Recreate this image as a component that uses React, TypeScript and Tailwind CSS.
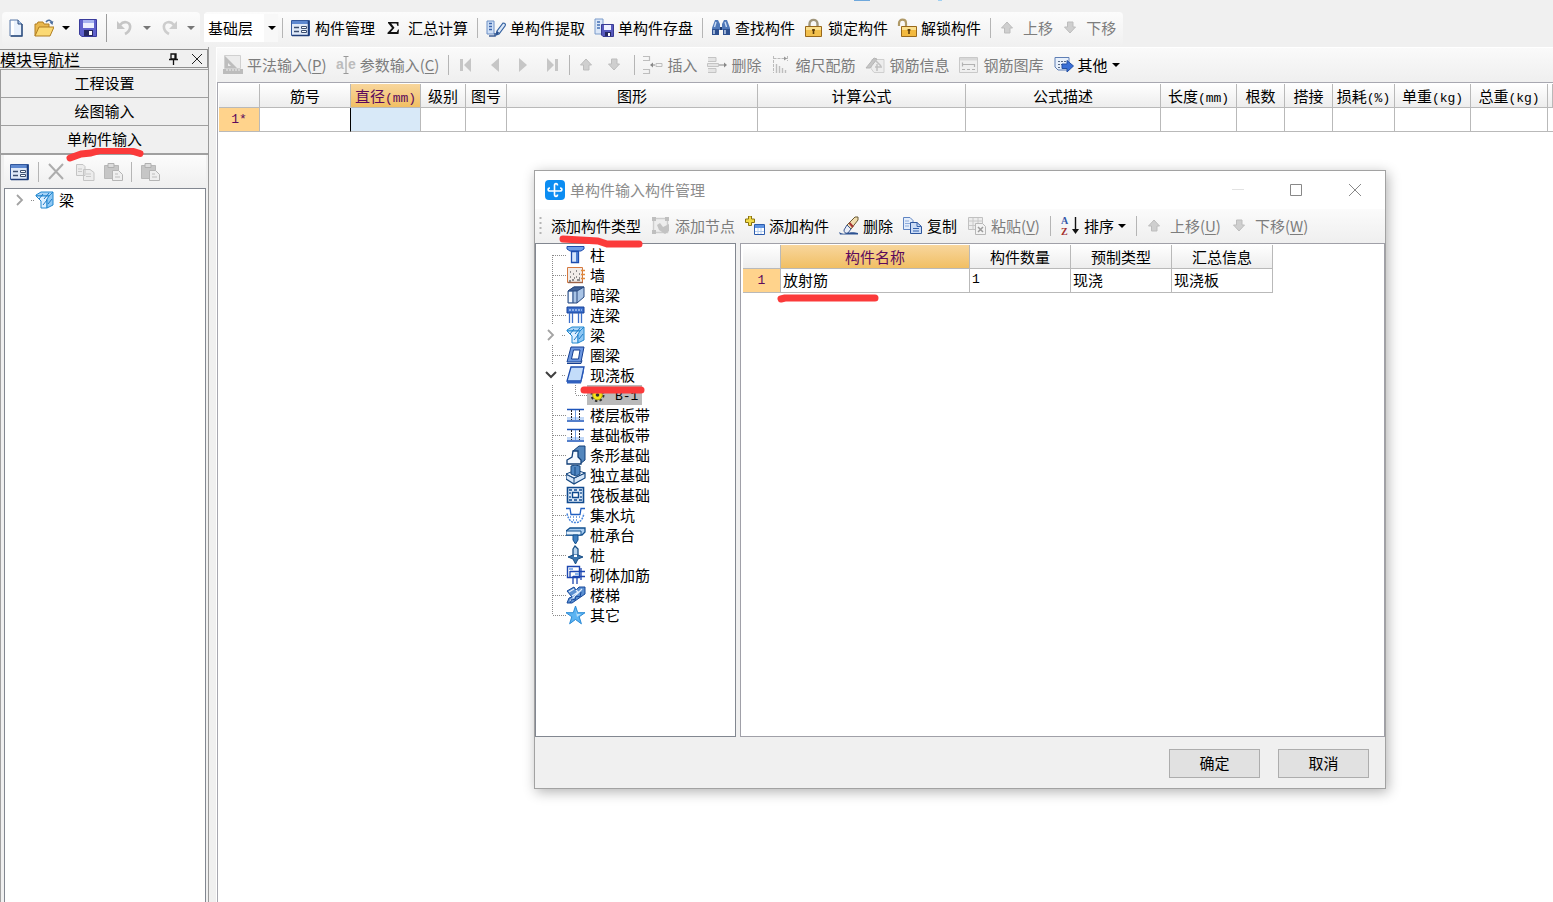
import { useState } from "react";
import type { ReactNode } from "react";
import clsx from "clsx";

type IconProps = { children: ReactNode; className?: string };

function Svg({ children, className }: IconProps) {
  return (
    <svg width="20" height="20" viewBox="0 0 20 20" fill="none" aria-hidden="true" className={clsx("shrink-0", className)}>
      {children}
    </svg>
  );
}

/* ---------- toolbar icons ---------- */

const NewIcon = () => (
  <Svg>
    <path d="M4 2h8l4 4v12H4z" fill="#e9f1fc" stroke="#5c7aa8" />
    <path d="M5 3h3v14H5z" fill="#fff" />
    <path d="M12 2v4h4" fill="#a9c3e8" stroke="#2f4f7f" />
    <path d="M16 6v12H5" stroke="#2f4f7f" strokeWidth="1.4" />
  </Svg>
);

const OpenIcon = () => (
  <Svg>
    <path d="M1 18V6h2l1-2h5l1 2h5v4" fill="#e9b84e" stroke="#b17f22" />
    <path d="M1 18 5 9h15l-4 9z" fill="#fbd974" stroke="#b17f22" />
    <path d="M12 4c2-3 5-2 6 1" stroke="#4d6f9f" strokeWidth="1.4" />
    <path d="m15.500 4.500 3 2.500.800-4z" fill="#4d6f9f" />
  </Svg>
);

const SaveIcon = () => (
  <Svg>
    <path d="M1.500 1.500h17v17H4l-2.500-2z" fill="#5f62cc" stroke="#3a3c9c" />
    <path d="M5 2h11v8H5z" fill="#eef1ff" />
    <path d="M5 2h11v3H5z" fill="#a8b4f0" />
    <path d="M6 12h9v6H6z" fill="#26285f" />
    <path d="M11 13h3v4h-3z" fill="#fff" />
  </Svg>
);

const UndoIcon = () => (
  <Svg>
    <path d="M5 7c4-5 11-3 10 3-.500 3-3 5-5 6" stroke="#c6c6c6" strokeWidth="2.600" />
    <path d="M2 3v8h8z" fill="#c6c6c6" />
  </Svg>
);

const RedoIcon = () => (
  <Svg>
    <path d="M15 7C11 2 4 4 5 10c.500 3 3 5 5 6" stroke="#cdcdcd" strokeWidth="2.600" />
    <path d="M18 3v8h-8z" fill="#cdcdcd" />
  </Svg>
);

const ManageIcon = () => (
  <Svg>
    <path d="M.500 2.500h18v15H.500z" fill="#dfe9f8" stroke="#33589c" />
    <path d="M1 3h17v3H1z" fill="#5d88d0" />
    <path d="M17.500 3v14.500H1" stroke="#1f3c78" strokeWidth="1.500" />
    <path d="M3 9.500h5M3 13.500h5" stroke="#3c4f70" strokeWidth="1.300" />
    <path d="M10.500 8.500h5v2h-5zM10.500 12.500h5v2h-5z" fill="#fff" stroke="#3c4f70" />
  </Svg>
);

const SigmaIcon = () => (
  <Svg>
    <path d="M4 4h10.500v4h-1l-1-2.400H7.200L10.500 9.800 6.800 14h6l1.200-2.400h1L14.500 16H3.500v-1.200L8 10 4 5z" fill="#111" />
  </Svg>
);

const ExtractIcon = () => (
  <Svg>
    <path d="M1 3h7v13H1z" fill="#cfe0f7" stroke="#6d8fc4" />
    <path d="M3 5.500h3M3 8.500h3M3 11.500h3" stroke="#3e66ac" strokeWidth="1.300" />
    <path d="M3 18h6v-3" stroke="#3e5f96" strokeWidth="1.600" />
    <path d="m10 17 1-4 6-8c2 0 3 1 2 3l-6 8z" fill="#dbe8f8" stroke="#33609f" strokeWidth="1.200" />
    <path d="m10 17 1-4 2.500 2z" fill="#2a4f8a" />
  </Svg>
);

const StoreIcon = () => (
  <Svg>
    <path d="M1 1h8v15H1z" fill="#dbe7f8" stroke="#7b9bcb" />
    <path d="M3 4h3M3 7h3M3 10h3" stroke="#4670b4" strokeWidth="1.400" />
    <path d="M7.500 6.500h12v12H9l-1.500-1.500z" fill="#5759bd" stroke="#393b93" />
    <path d="M10 7h7v5h-7z" fill="#eef1ff" />
    <path d="M11 14h6v4h-6z" fill="#26285f" />
    <path d="M14 15h2v3h-2z" fill="#fff" />
  </Svg>
);

const BinocularsIcon = () => (
  <Svg>
    <path d="M4 2h3l2 4v3h2V6l2-4h3l3 8v7h-7v-5H8v5H1v-7z" fill="#4f78b8" />
    <path d="M1 11h7v6H1zM12 11h7v6h-7z" fill="#2d5090" />
    <path d="M3 12v4M14 12v4M5 4 3.500 9M14 4l1.500 5" stroke="#c9dbf4" strokeWidth="1.400" />
    <path d="M9 9h2v3H9z" fill="#1f3b70" />
  </Svg>
);

const LockIcon = () => (
  <Svg>
    <path d="M5.500 9V6c0-5.500 8-5.500 8 0v3" stroke="#a0967c" strokeWidth="2.400" />
    <path d="M1.500 8.500h16v10h-16z" fill="#f2c04d" stroke="#98681b" />
    <path d="M2 9h15v3H2z" fill="#fadf8e" />
    <path d="M9.500 11v5M8 12h3" stroke="#5d3c09" strokeWidth="1.600" />
  </Svg>
);

const UnlockIcon = () => (
  <Svg>
    <path d="M2 8V5c0-4.500 7-4.500 7 0v4" stroke="#b09a68" strokeWidth="2.200" />
    <path d="M4.500 8.500h15v10h-15z" fill="#f2b93f" stroke="#98681b" />
    <path d="M5 9h14v3H5z" fill="#fadf8e" />
    <path d="M12 11v5M10.500 12h3" stroke="#5d3c09" strokeWidth="1.600" />
  </Svg>
);

const UpIcon = () => (
  <Svg>
    <path d="m8 4 5.500 6H11v5H5.500v-5H2.500z" fill="#cfcfcf" stroke="#bdbdbd" />
  </Svg>
);

const DownIcon = () => (
  <Svg>
    <path d="m8 15 5.500-6H11V4H5.500v5H2.500z" fill="#cfcfcf" stroke="#bdbdbd" />
  </Svg>
);

const RulerIcon = () => (
  <Svg>
    <path d="M1.500.500h16v13h-16z" fill="#ececec" stroke="#d0d0d0" />
    <path d="M2 1v12h12z" fill="#bdbdbd" />
    <path d="M5 8v3h3z" fill="#eee" />
    <path d="M0 14h20v5H0z" fill="#bcbcbc" />
    <path d="M4 14v2M7 14v2M10 14v2M13 14v2M16 14v2" stroke="#eee" />
  </Svg>
);

const ParamIcon = () => (
  <svg width="20" height="20" viewBox="0 0 20 20" className="shrink-0" aria-hidden="true">
    <text x="0" y="14" fontSize="14" fontWeight="bold" fontFamily="Liberation Sans" fill="#bcbcbc">a</text>
    <text x="12" y="14" fontSize="14" fontWeight="bold" fontFamily="Liberation Sans" fill="#bcbcbc">e</text>
    <path d="M7.500 1.500h5M7.500 18.500h5M10 2v16" stroke="#999" />
  </svg>
);

const FirstIcon = () => (
  <Svg>
    <path d="M3 4h3v12H3zM14 3v14l-7-7z" fill="#c6c6c6" />
  </Svg>
);
const PrevIcon = () => (
  <Svg>
    <path d="M14 3v14l-8-7z" fill="#c6c6c6" />
  </Svg>
);
const NextIcon = () => (
  <Svg>
    <path d="M6 3v14l8-7z" fill="#c6c6c6" />
  </Svg>
);
const LastIcon = () => (
  <Svg>
    <path d="M14 4h3v12h-3zM6 3v14l7-7z" fill="#c6c6c6" />
  </Svg>
);

const InsertIcon = () => (
  <Svg>
    <path d="M0 1.500h6.500v4H0M0 14.500h6.500v4H0" stroke="#bdbdbd" strokeWidth="1.200" />
    <path d="M13 8.500h6v3h-6z" stroke="#bdbdbd" />
    <path d="M12 10H8" stroke="#888" />
    <path d="m7 10 3-2.500v5z" fill="#888" />
  </Svg>
);

const RemoveRowIcon = () => (
  <Svg>
    <path d="M1 2.500h8v4H1M1 13.500h8v4H1M.500 8.500h11v3H.500z" stroke="#c4c4c4" fill="#e4e4e4" />
    <path d="M12 10h6" stroke="#888" />
    <path d="m20 10-3-2.500v5z" fill="#888" />
  </Svg>
);

const ScaleIcon = () => (
  <Svg>
    <path d="M2.500 1v17M2.500 3.500h14M16.500 1v5" stroke="#bbb" strokeDasharray="3 1" />
    <path d="m16 3.500-3-2v4z" fill="#999" />
    <path d="M5.500 9v9M8.500 11v7M11.500 13v5M14.500 15v3" stroke="#bdbdbd" strokeWidth="1.400" />
  </Svg>
);

const RebarInfoIcon = () => (
  <Svg>
    <path d="M7 4.500h12v13H9l-3-4z" fill="#ededed" stroke="#cfcfcf" />
    <path d="m1 13 8-10 3 1-7 9z" fill="#c6c6c6" stroke="#b5b5b5" />
    <path d="m9 4 7 7M10 12h7M12 9v7" stroke="#c0c0c0" strokeWidth="1.500" />
  </Svg>
);

const RebarLibIcon = () => (
  <Svg>
    <path d="M.500 2.500h18v15H.500z" fill="#efefef" stroke="#c9c9c9" />
    <path d="M1 3h17v2.500H1z" fill="#d8d8d8" />
    <path d="M3.500 7.500v4M3.500 9.500h12M15.500 9v3M3 14.500h3M8 14.500h3M13 14.500h3" stroke="#b2b2b2" strokeWidth="1.200" />
  </Svg>
);

const OtherIcon = () => (
  <Svg>
    <path d="M1 2.500h14V15H4l-3-3z" fill="#e8f0fb" stroke="#5f7fb5" />
    <path d="M4 6.500h8M4 9.500h4M4 12.500h3" stroke="#5b6b86" strokeDasharray="2 1" />
    <path d="M8 9h5V5.500l6.500 5.500-6.500 6v-3.500H8z" fill="#3a6fd6" stroke="#2450a4" />
  </Svg>
);

const NodeIcon = () => (
  <Svg>
    <path d="M2.500 2.500h14v14h-14z" fill="#ededed" stroke="#cdcdcd" strokeWidth="1.400" />
    <path d="M1 1h4v4H1zM14 1h4v4h-4zM1 14h4v4H1z" fill="#bfbfbf" />
    <path d="m6 9 3-2 3 4 6-3v7l-4 3-6-4z" fill="#c3c3c3" />
  </Svg>
);

const AddItemIcon = () => (
  <Svg>
    <path d="M3.500 0h3v3h3v3.500h-3v3h-3v-3h-3V3h3z" fill="#f2dc4a" stroke="#8b7410" />
    <path d="M9.500 8.500h10v10h-10z" fill="#fff" stroke="#2d5cad" />
    <path d="M10 9h9v3h-9z" fill="#5e93e2" />
    <path d="M10 15.500h9M13 12v6M16 12v6" stroke="#b5cef0" />
  </Svg>
);

const EraseIcon = () => (
  <Svg>
    <path d="m8 9 8-8h3v3l-7 9z" fill="#f0ddb0" stroke="#6a5a35" />
    <path d="m8 9 4 4-3 4c-3 1-4-1-4-3z" fill="#e9eef8" stroke="#3b568d" />
    <path d="m10.500 7 3.500 4" stroke="#a53434" strokeWidth="2" />
    <path d="M0 16c3 2 5 2 8 1s8-1 11 0v1.500H1z" fill="#2c5292" />
  </Svg>
);

const CopyIcon = () => (
  <Svg>
    <path d="M.500 1.500H7l3 3v9H.500z" fill="#e3edfb" stroke="#5f84c2" />
    <path d="M2 5h4M2 7.500h5M2 10h4" stroke="#8dabdb" />
    <path d="M7.500 6.500H14l4.500 4v7h-11z" fill="#cbdcf6" stroke="#2c559d" />
    <path d="M14 6.500v4h4M10 12.500h6M10 15h6" stroke="#3463ae" />
  </Svg>
);

const PasteTableIcon = () => (
  <Svg>
    <path d="M1.500 1.500h14v12h-14z" fill="#ededed" stroke="#c1c1c1" />
    <path d="M2 5h14M2 9.500h14M6 2v12M11 2v12" stroke="#c8c8c8" />
    <path d="M8.500 7.500h7l3 3v8h-10z" fill="#f3f3f3" stroke="#b7b7b7" />
    <path d="m11 11 5 5M16 11l-5 5" stroke="#9c9c9c" strokeWidth="1.500" />
  </Svg>
);

const SortIcon = () => (
  <svg width="20" height="24" viewBox="0 0 20 24" className="shrink-0" aria-hidden="true">
    <text x="1" y="10" fontSize="10" fontWeight="bold" fontFamily="Liberation Serif" fill="#3358a8">A</text>
    <text x="1" y="21" fontSize="10" fontWeight="bold" fontFamily="Liberation Serif" fill="#a32e2e">Z</text>
    <path d="M15.500 3v14" stroke="#111" strokeWidth="1.400" />
    <path d="M12 15h7l-3.500 5z" fill="#111" />
  </svg>
);

const GrayCopyIcon = () => (
  <Svg>
    <path d="M1.500 2.500H8l2 2v9H1.500zM8.500 7.500H15l4 3v8H8.500z" fill="#ececec" stroke="#c4c4c4" />
    <path d="M3 7h4M3 9.500h4M11 12h5M11 14.500h5" stroke="#c9c9c9" />
  </Svg>
);

const GrayPasteIcon = () => (
  <Svg>
    <path d="M1.500 3.500h14v13h-14z" fill="#c6c6c6" stroke="#b8b8b8" />
    <path d="M5 1.500h6v4H5z" fill="#dcdcdc" stroke="#b0b0b0" />
    <path d="M9.500 8.500h6l4 4v6h-10z" fill="#efefef" stroke="#b5b5b5" />
    <path d="M12 12h3M12 15h5" stroke="#bdbdbd" />
  </Svg>
);

const GrayCrossIcon = () => (
  <Svg>
    <path d="m2 2 14 15M16 2 2 17" stroke="#adadad" strokeWidth="2" />
  </Svg>
);

/* ---------- member type icons ---------- */

const ColumnIcon = () => (
  <Svg>
    <path d="M1 1.500h17V4l-3 2H4L1 4z" fill="#6f9ee6" stroke="#1d4cae" />
    <path d="M5.500 6.500h7v11h-7z" fill="#d4e4fb" stroke="#1d4cae" strokeWidth="1.300" />
    <path d="M10 7h2v10h-2z" fill="#4a7cd0" />
  </Svg>
);

const WallIcon = () => (
  <Svg>
    <path d="M1.500 2.500h15v15h-15z" fill="#f1ece8" stroke="#d5783f" />
    <path d="M4 12h1M7 9h1M10 12h1M6 15h2M11 15h3M13 9h1M4 7h1M10 6h1M8 13h1M3 16h2M13 13h1" stroke="#6c6c6c" strokeWidth="1.500" />
    <path d="M15 5.500h4M15 9.500h4M15 13.500h4" stroke="#e08a3c" strokeWidth="1.500" />
    <path d="M2 17.500h15" stroke="#9b6247" strokeWidth="1.400" />
  </Svg>
);

const HiddenBeamIcon = () => (
  <Svg>
    <path d="m2 6 6-4h10v10l-7 6H2z" fill="#a9c4e6" stroke="#28497f" />
    <path d="m2 6 6-4h10l-7 4z" fill="#3f6197" stroke="#28497f" />
    <path d="M7 6v12M11 6v12" stroke="#28497f" />
    <path d="M3 7h3v10H3z" fill="#f3f8ff" />
  </Svg>
);

const LinkBeamIcon = () => (
  <Svg>
    <path d="M1 2h17v6H1z" fill="#3c6fca" stroke="#16429b" />
    <path d="M3 5h13" stroke="#a9c6f3" strokeDasharray="2 1" strokeWidth="1.400" />
    <path d="M3.500 8v10M6.500 8v10M12.500 8v10M15.500 8v10" stroke="#3c6fca" strokeWidth="1.300" />
  </Svg>
);

const BeamIcon = () => (
  <Svg>
    <path d="M1 5 6 2h12l-4 4H1z" fill="#a6d3f7" stroke="#2187cf" />
    <path d="M1 6h13v3h-2v9H6v-7z" fill="#dcefff" stroke="#2187cf" />
    <path d="m14 6 4-4v13l-6 3V9z" fill="#8fc8f4" stroke="#2187cf" />
    <path d="m4 9 4-5M9 9l5-6M8 15l4-5M13 14l4-5" stroke="#1c78c4" />
  </Svg>
);

const RingBeamIcon = () => (
  <Svg>
    <path d="M5 2h13l-3 15H1z" fill="#6c97e0" stroke="#153f92" />
    <path d="M7.500 5H14l-1.500 9H5.500z" fill="#fff" stroke="#153f92" />
    <path d="M1 18.500h14l1-3" stroke="#153f92" />
  </Svg>
);

const SlabIcon = () => (
  <Svg>
    <path d="M5 2h13l-3 14H1z" fill="#c3dcfa" stroke="#1d4cae" strokeWidth="1.300" />
    <path d="M1 16h14l3-14v4l-3 12.500H1z" fill="#2f60bf" />
  </Svg>
);

const StripIcon = () => (
  <Svg>
    <path d="M1 4.500h17M1 16h17" stroke="#1d55bb" strokeWidth="1.600" />
    <path d="M1 12h17v3H1z" fill="#c3d9f7" />
    <path d="M5.500 5v10M13.500 5v10" stroke="#222" strokeDasharray="2 1" />
    <path d="M9.500 5v10" stroke="#6b9be0" />
  </Svg>
);

const StripFootingIcon = () => (
  <Svg>
    <path d="m7 6 6-5h6v14l-5 4z" fill="#5487bd" stroke="#123f78" />
    <path d="M7 6h5v6l3 3v4H1v-4l5-3z" fill="#f3f8ff" stroke="#123f78" strokeWidth="1.300" />
  </Svg>
);

const PadFootingIcon = () => (
  <Svg>
    <path d="m0 9 8 4 11-5v5L8 19l-8-5z" fill="#d7e7f8" stroke="#14467f" strokeWidth="1.200" />
    <path d="m0 9 10-4 9 3-11 5z" fill="#eef5fd" stroke="#14467f" />
    <path d="m5 1 4-1 5 1v8l-4 2-5-2z" fill="#4f86c2" stroke="#14467f" />
    <path d="M8 13v6M9 2v8" stroke="#14467f" />
  </Svg>
);

const RaftIcon = () => (
  <Svg>
    <path d="M1.500 2.500h16v15h-16z" fill="#dceaf8" stroke="#104a8e" strokeWidth="1.600" />
    <path d="M6.500 7.500h6v5h-6z" fill="#fff" stroke="#104a8e" strokeWidth="1.400" />
    <path d="M3 5h3M8 5h3M13 5h3M3 15h3M8 15h3M13 15h3M4 7v2M4 11v2M15 7v2M15 11v2" stroke="#104a8e" strokeWidth="1.300" />
  </Svg>
);

const SumpIcon = () => (
  <Svg>
    <path d="M0 3.500h4l1 6h9l1-6h4" stroke="#205fc2" strokeWidth="1.300" />
    <path d="M1 8.500c2 8 5 9 8.500 9s6.500-1 8.500-9" stroke="#4a87dc" strokeDasharray="2 1" strokeWidth="1.500" />
    <path d="M4 12h11M7 15h6" stroke="#4a87dc" strokeDasharray="1 2" strokeWidth="1.500" />
  </Svg>
);

const PileCapIcon = () => (
  <Svg>
    <path d="m0 6 4-3h15v4l-3 3H0z" fill="#a9cdf1" stroke="#12508f" strokeWidth="1.300" />
    <path d="M0 6h15v4H0z" fill="#e4f1fd" stroke="#12508f" />
    <path d="M7 10v5l2.500 4 2.500-4v-5z" fill="#3f7fc0" stroke="#12508f" />
  </Svg>
);

const PileIcon = () => (
  <Svg>
    <path d="m7 4 2-3 3 3v7H7z" fill="#b9d5ee" stroke="#184f86" strokeWidth="1.300" />
    <path d="m2 12 5-2h5l5 2-5 2-2.500 5L7 14z" fill="#3b74ac" stroke="#184f86" />
    <path d="M8 11h3" stroke="#fff" strokeWidth="2" />
  </Svg>
);

const MasonryIcon = () => (
  <Svg>
    <path d="M1.500 1.500h12v11h-12z" stroke="#1c46b0" strokeWidth="1.400" />
    <path d="M4 6.500h15M4 13V6M7 11v8M11 11v8M15 3v12M7 11.500h12" stroke="#1c46b0" strokeWidth="1.300" />
    <path d="M3 3h4v2H3zM9 8h4v2H9z" fill="#8bb4ea" />
  </Svg>
);

const StairIcon = () => (
  <Svg>
    <path d="m1 6 7-4 2 3 3-3h6v7L6 18H1l2-5 3-1z" fill="#5b8fd0" stroke="#16489b" />
    <path d="m3 7 5-3M6 11l6-4M4 16 16 4M10 5l3 3" stroke="#e3effc" strokeWidth="1.200" />
    <path d="m4 18 2-4 3 1 1-4 4 1 1-5" stroke="#16489b" />
  </Svg>
);

const StarIcon = () => (
  <Svg>
    <path d="m9.500 1 2.200 6.700H19l-5.800 4.100 2.200 7-5.900-4.300-5.900 4.300 2.200-7L0 7.700h7.300z" fill="#5cb4f2" stroke="#2b8ad6" />
    <path d="m9.500 4 1.500 5h4l-4 3z" fill="#b4defb" />
  </Svg>
);

const GearIcon = () => (
  <Svg>
    <circle cx="10.500" cy="9" r="5" stroke="#333" strokeWidth="4" strokeDasharray="2 1.900" />
    <circle cx="10.500" cy="9" r="4.800" fill="#f5e61a" stroke="#b3a80c" />
    <circle cx="10.500" cy="9" r="1.800" fill="#333" />
  </Svg>
);

/* ---------- small shared parts ---------- */

function Caret({ muted = false }: { muted?: boolean }) {
  return (
    <svg width="8" height="4" viewBox="0 0 8 4" className="shrink-0" aria-hidden="true">
      <path d="M0 0h8L4 4z" fill={muted ? "#777" : "#000"} />
    </svg>
  );
}

function Separator() {
  return (
    <span className="flex h-5 w-[9px] shrink-0 justify-center">
      <span className="w-px bg-[#b5b5b5]" />
    </span>
  );
}

type ToolProps = { icon?: ReactNode; label: string; accel?: string; disabled?: boolean; menu?: boolean };

function Tool({ icon, label, accel, disabled = false, menu = false }: ToolProps) {
  return (
    <button
      type="button"
      disabled={disabled}
      className={clsx(
        "flex h-6 shrink-0 items-center gap-1 pr-[5px] pl-1 text-[15px] leading-5 whitespace-nowrap",
        disabled ? "text-[#7d7d7d]" : "text-black"
      )}
    >
      {icon}
      <span>
        {label}
        {accel && (
          <>
            (<u className="underline-offset-2">{accel}</u>)
          </>
        )}
      </span>
      {menu && <Caret />}
    </button>
  );
}

function IconTool({ icon, label, disabled = false }: { icon: ReactNode; label: string; disabled?: boolean }) {
  return (
    <button type="button" aria-label={label} disabled={disabled} className="flex h-6 w-7 shrink-0 items-center justify-center">
      {icon}
    </button>
  );
}

// Hand-drawn red marker stroke laid over the element it highlights
function Marker({ d, className }: { d: string; className: string }) {
  return (
    <svg
      width="110"
      height="16"
      viewBox="0 0 110 16"
      fill="none"
      aria-hidden="true"
      className={clsx("pointer-events-none absolute z-10", className)}
    >
      <path d={d} stroke="#fb3a3a" strokeWidth="7" strokeLinecap="round" strokeLinejoin="round" />
    </svg>
  );
}

/* ---------- main window ---------- */

function MainToolbar() {
  const [floor, setFloor] = useState("基础层");

  return (
    <div className="flex h-[35px] shrink-0 gap-1 pl-[2px]">
      <div className="flex w-[198px] shrink-0 items-center rounded bg-linear-to-b from-[#fcfcfc] to-[#f0f0f0] pb-1 pl-1">
        <button type="button" aria-label="新建"><NewIcon /></button>
        <button type="button" aria-label="打开" className="ml-2 flex items-center gap-2">
          <OpenIcon />
          <Caret />
        </button>
        <button type="button" aria-label="保存" className="ml-2"><SaveIcon /></button>
        <span className="ml-2 h-7 w-px bg-[#9c9c9c]" />
        <button type="button" aria-label="撤销" disabled className="ml-2 flex items-center gap-2">
          <UndoIcon />
          <Caret muted />
        </button>
        <button type="button" aria-label="重做" disabled className="ml-2 flex items-center gap-2">
          <RedoIcon />
          <Caret muted />
        </button>
      </div>
      <div className="flex shrink-0 items-center rounded bg-linear-to-b from-[#fcfcfc] to-[#f0f0f0] pr-[2px] pb-1">
        <label className="relative flex">
          <span className="sr-only">楼层</span>
          <select
            value={floor}
            onChange={(event) => setFloor(event.target.value)}
            className="h-7 w-[74px] appearance-none bg-white pl-1 text-[15px] leading-7 text-black"
          >
            <option>基础层</option>
            <option>首层</option>
          </select>
          <span className="pointer-events-none absolute inset-y-0 right-0 flex w-[14px] items-center bg-[#f8f8f8] pl-1">
            <Caret />
          </span>
        </label>
        <Separator />
        <Tool icon={<ManageIcon />} label="构件管理" />
        <Tool icon={<SigmaIcon />} label="汇总计算" />
        <Separator />
        <Tool icon={<ExtractIcon />} label="单构件提取" />
        <Tool icon={<StoreIcon />} label="单构件存盘" />
        <Separator />
        <Tool icon={<BinocularsIcon />} label="查找构件" />
        <Tool icon={<LockIcon />} label="锁定构件" />
        <Tool icon={<UnlockIcon />} label="解锁构件" />
        <Separator />
        <Tool icon={<UpIcon />} label="上移" disabled />
        <Tool icon={<DownIcon />} label="下移" disabled />
      </div>
    </div>
  );
}

function Sidebar() {
  return (
    <aside className="flex w-[209px] shrink-0 flex-col border-r border-[#9a9a9a]">
      <header className="mt-[2px] flex h-[19px] shrink-0 items-center border border-l-0 border-[#8f8f8f] pr-1">
        <h2 className="flex-1 text-base leading-4">模块导航栏</h2>
        <button type="button" aria-label="固定" className="mr-3">
          <svg width="11" height="12" viewBox="0 0 11 12" fill="none" aria-hidden="true">
            <path d="M3 1h5v5H3zM7 1v5M1 6.500h9M5.500 7v5" stroke="#111" strokeWidth="1.300" />
          </svg>
        </button>
        <button type="button" aria-label="关闭">
          <svg width="12" height="12" viewBox="0 0 12 12" fill="none" aria-hidden="true">
            <path d="m1 1 10 10M11 1 1 11" stroke="#222" />
          </svg>
        </button>
      </header>
      <nav className="relative mt-px flex shrink-0 flex-col border-l border-[#9a9a9a] text-[15px]">
        {["工程设置", "绘图输入", "单构件输入"].map((name) => (
          <button key={name} type="button" className="h-7 border-t border-[#a0a0a0] bg-[#f0f0f0] text-black">
            {name}
          </button>
        ))}
        <Marker d="M5 10 16 6 26 5 35 2.500 65 2.500 75 5.500" className="top-[79px] left-[64px]" />
      </nav>
      <div className="flex min-h-0 flex-1 flex-col border-t-2 border-l border-[#a0a0a0] pr-[2px] pl-[3px]">
        <div className="flex h-[33px] shrink-0 items-center bg-linear-to-b from-[#fcfcfc] to-[#efefef] pl-[2px]">
          <IconTool icon={<ManageIcon />} label="构件管理" />
          <Separator />
          <IconTool icon={<GrayCrossIcon />} label="删除" disabled />
          <IconTool icon={<GrayCopyIcon />} label="复制" disabled />
          <IconTool icon={<GrayPasteIcon />} label="粘贴" disabled />
          <Separator />
          <IconTool icon={<GrayPasteIcon />} label="全部粘贴" disabled />
        </div>
        <ul className="flex-1 border border-b-0 border-[#828790] bg-white pt-px">
          <li className="flex h-5 items-center pl-2 text-[15px]">
            <TreeGuide kind="collapsed" />
            <BeamIcon />
            <span className="ml-1">梁</span>
          </li>
        </ul>
      </div>
    </aside>
  );
}

const GRID_COLUMNS: Array<{ label: string; unit?: string; width: string }> = [
  { label: "筋号", width: "w-[91px]" },
  { label: "直径", unit: "(mm)", width: "w-[70px]" },
  { label: "级别", width: "w-[45px]" },
  { label: "图号", width: "w-[41px]" },
  { label: "图形", width: "w-[251px]" },
  { label: "计算公式", width: "w-[208px]" },
  { label: "公式描述", width: "w-[195px]" },
  { label: "长度", unit: "(mm)", width: "w-[76px]" },
  { label: "根数", width: "w-[48px]" },
  { label: "搭接", width: "w-[48px]" },
  { label: "损耗", unit: "(%)", width: "w-[62px]" },
  { label: "单重", unit: "(kg)", width: "w-[76px]" },
  { label: "总重", unit: "(kg)", width: "w-[77px]" },
];

const headCell = "h-6 border-r border-b border-[#b9b9b9] p-0 font-normal whitespace-nowrap";
const plainHead = "bg-linear-to-b from-white to-[#ededed] text-black";
const activeHead = "bg-linear-to-b from-[#f8d69c] to-[#f1bf63] text-[#5c0a5c]";
const rowHead = "border-r border-b border-[#b9b9b9] bg-[#ffd38c] p-0 text-center font-normal text-[#5c0a5c]";
const monoText = "font-['Liberation_Mono',monospace] text-[13px] leading-none";

function RebarGrid() {
  return (
    <table className="w-full table-fixed border-separate border-spacing-0 text-[15px] leading-5">
      <thead>
        <tr>
          <th className={clsx(headCell, plainHead, "w-[41px]")} />
          {GRID_COLUMNS.map((column, index) => (
            <th key={column.label} className={clsx(headCell, column.width, index === 1 ? activeHead : plainHead)}>
              {column.label}
              {column.unit && <span className={monoText}>{column.unit}</span>}
            </th>
          ))}
          <th className={clsx(headCell, plainHead)} />
        </tr>
      </thead>
      <tbody>
        <tr>
          <th scope="row" className={clsx(rowHead, monoText, "h-6")}>1*</th>
          {GRID_COLUMNS.map((column, index) => (
            <td
              key={column.label}
              className={clsx(
                "border-r border-b p-0",
                index === 0 ? "border-r-black border-b-[#b9b9b9]" : "border-[#b9b9b9]",
                index === 1 && "bg-[#d8e9f8]"
              )}
            />
          ))}
          <td className="border-b border-[#b9b9b9]" />
        </tr>
      </tbody>
    </table>
  );
}

function Workspace() {
  return (
    <main className="ml-[7px] flex min-w-0 flex-1 flex-col border-t border-l border-white">
      <div className="flex h-[34px] shrink-0 items-center overflow-hidden bg-linear-to-b from-[#fafafa] to-[#efefef] pl-[2px]">
        <Tool icon={<RulerIcon />} label="平法输入" accel="P" disabled />
        <Tool icon={<ParamIcon />} label="参数输入" accel="C" disabled />
        <Separator />
        <IconTool icon={<FirstIcon />} label="首条" disabled />
        <IconTool icon={<PrevIcon />} label="上一条" disabled />
        <IconTool icon={<NextIcon />} label="下一条" disabled />
        <IconTool icon={<LastIcon />} label="末条" disabled />
        <Separator />
        <IconTool icon={<UpIcon />} label="上移行" disabled />
        <IconTool icon={<DownIcon />} label="下移行" disabled />
        <Separator />
        <div className="flex gap-px">
          <Tool icon={<InsertIcon />} label="插入" disabled />
          <Tool icon={<RemoveRowIcon />} label="删除" disabled />
          <Tool icon={<ScaleIcon />} label="缩尺配筋" disabled />
          <Tool icon={<RebarInfoIcon />} label="钢筋信息" disabled />
          <Tool icon={<RebarLibIcon />} label="钢筋图库" disabled />
          <Tool icon={<OtherIcon />} label="其他" menu />
        </div>
      </div>
      <div className="flex-1 border-t border-l border-[#a7a7b0] bg-white pt-px pl-px">
        <RebarGrid />
      </div>
    </main>
  );
}

/* ---------- member tree ---------- */

type GuideKind = "first" | "branch" | "last" | "collapsed" | "expanded";

const GUIDE_LINES: Record<GuideKind, string> = {
  first: "M8.500 10v10M9 10.500h13",
  branch: "M8.500 0v20M9 10.500h13",
  last: "M8.500 0v10M9 10.500h13",
  collapsed: "M18 10.500h4",
  expanded: "M18 10.500h4",
};

function TreeGuide({ kind }: { kind: GuideKind }) {
  return (
    <svg width="22" height="20" viewBox="0 0 22 20" fill="none" className="shrink-0" aria-hidden="true">
      <path d={GUIDE_LINES[kind]} stroke="#8a8a8a" strokeDasharray="1 1" />
      {kind === "collapsed" && <path d="m4 5 5 5-5 5" stroke="#a3a3a3" strokeWidth="1.800" />}
      {kind === "expanded" && <path d="m2 7 5 5 5-5" stroke="#404040" strokeWidth="2" />}
    </svg>
  );
}

const MEMBER_TYPES: Array<{ name: string; icon: ReactNode; kind: GuideKind }> = [
  { name: "柱", icon: <ColumnIcon />, kind: "first" },
  { name: "墙", icon: <WallIcon />, kind: "branch" },
  { name: "暗梁", icon: <HiddenBeamIcon />, kind: "branch" },
  { name: "连梁", icon: <LinkBeamIcon />, kind: "branch" },
  { name: "梁", icon: <BeamIcon />, kind: "collapsed" },
  { name: "圈梁", icon: <RingBeamIcon />, kind: "branch" },
  { name: "现浇板", icon: <SlabIcon />, kind: "expanded" },
  { name: "楼层板带", icon: <StripIcon />, kind: "branch" },
  { name: "基础板带", icon: <StripIcon />, kind: "branch" },
  { name: "条形基础", icon: <StripFootingIcon />, kind: "branch" },
  { name: "独立基础", icon: <PadFootingIcon />, kind: "branch" },
  { name: "筏板基础", icon: <RaftIcon />, kind: "branch" },
  { name: "集水坑", icon: <SumpIcon />, kind: "branch" },
  { name: "桩承台", icon: <PileCapIcon />, kind: "branch" },
  { name: "桩", icon: <PileIcon />, kind: "branch" },
  { name: "砌体加筋", icon: <MasonryIcon />, kind: "branch" },
  { name: "楼梯", icon: <StairIcon />, kind: "branch" },
  { name: "其它", icon: <StarIcon />, kind: "last" },
];

function MemberTree() {
  return (
    <ul className="w-[201px] shrink-0 border border-[#828790] bg-white pt-px text-[15px] leading-5">
      {MEMBER_TYPES.map((member) => (
        <li key={member.name} className="relative">
          <div className="flex h-5 items-center pl-2">
            <TreeGuide kind={member.kind} />
            {member.icon}
            <span className="ml-1">{member.name}</span>
          </div>
          {member.kind === "expanded" && (
            <>
              <div className="flex h-5 pl-2">
                <svg width="43" height="20" viewBox="0 0 43 20" fill="none" className="shrink-0" aria-hidden="true">
                  <path d="M8.500 0v20M31.500 0v10M32 10.500h11" stroke="#8a8a8a" strokeDasharray="1 1" />
                </svg>
                <button type="button" className={clsx(monoText, "flex items-center bg-[#bababa] pt-[2px] pr-1")}>
                  <GearIcon />
                  <span className="ml-2">B-1</span>
                </button>
              </div>
              <Marker d="M4 5H61" className="top-5 left-[44px]" />
            </>
          )}
        </li>
      ))}
    </ul>
  );
}

/* ---------- dialog ---------- */

const bodyCell = "relative border-r border-b border-[#b9b9b9] px-[2px] pt-0 pb-[2px]";

function MemberTable() {
  return (
    <table className="table-fixed border-separate border-spacing-0 text-[15px] leading-5">
      <thead>
        <tr>
          <th className={clsx(headCell, plainHead, "w-[38px]")} />
          <th className={clsx(headCell, activeHead, "w-[189px]")}>构件名称</th>
          <th className={clsx(headCell, plainHead, "w-[101px]")}>构件数量</th>
          <th className={clsx(headCell, plainHead, "w-[101px]")}>预制类型</th>
          <th className={clsx(headCell, plainHead, "w-[101px]")}>汇总信息</th>
        </tr>
      </thead>
      <tbody>
        <tr>
          <th scope="row" className={clsx(rowHead, monoText, "h-6")}>1</th>
          <td className={bodyCell}>
            放射筋
            <Marker d="M5 6 9 5H99" className="top-6 -left-[5px]" />
          </td>
          <td className={clsx(bodyCell, monoText)}>1</td>
          <td className={bodyCell}>现浇</td>
          <td className={bodyCell}>现浇板</td>
        </tr>
      </tbody>
    </table>
  );
}

function MemberDialog() {
  return (
    <section
      role="dialog"
      aria-labelledby="dialog-title"
      className="absolute top-[170px] left-[534px] flex h-[619px] w-[852px] flex-col border border-[#a2a2a2] bg-[#f0f0f0] shadow-[2px_3px_12px_rgba(0,0,0,0.3)]"
    >
      <header className="flex h-[38px] shrink-0 items-center bg-white pl-[10px]">
        <svg width="20" height="20" viewBox="0 0 20 20" fill="none" aria-hidden="true">
          <rect width="20" height="20" rx="4" fill="#0c8df2" />
          <path d="M12.500 5.500c0-2.500-3-2.500-3 0v9c0 2.500 3 2.500 3 0M5 8c-2.500 0-2.500 3 0 3h10c2.500 0 2.500-3 0-3" stroke="#fff" strokeWidth="1.600" />
        </svg>
        <h1 id="dialog-title" className="ml-[5px] flex-1 text-[15px] text-[#8c8c8c]">单构件输入构件管理</h1>
        <button type="button" aria-label="最小化" disabled className="flex w-[58px] justify-center">
          <svg width="12" height="12" aria-hidden="true"><path d="M0 5.500h12" stroke="#e2e2e2" /></svg>
        </button>
        <button type="button" aria-label="最大化" className="flex w-[58px] justify-center">
          <svg width="12" height="12" fill="none" aria-hidden="true"><path d="M.500.500h11v11H.500z" stroke="#888" /></svg>
        </button>
        <button type="button" aria-label="关闭" className="flex w-[60px] justify-center">
          <svg width="12" height="12" aria-hidden="true"><path d="m0 0 12 12M12 0 0 12" stroke="#888" /></svg>
        </button>
      </header>
      <div className="relative flex h-[34px] shrink-0 items-center gap-px bg-linear-to-b from-[#fbfbfb] to-[#efefef] pl-1">
        <svg width="3" height="18" viewBox="0 0 3 18" className="mr-1 shrink-0" aria-hidden="true">
          <path d="M1.500 0v18" stroke="#b5b5b5" strokeWidth="2" strokeDasharray="2 3" />
        </svg>
        <Tool label="添加构件类型" />
        <Tool icon={<NodeIcon />} label="添加节点" disabled />
        <Tool icon={<AddItemIcon />} label="添加构件" />
        <Tool icon={<EraseIcon />} label="删除" />
        <Tool icon={<CopyIcon />} label="复制" />
        <Tool icon={<PasteTableIcon />} label="粘贴" accel="V" disabled />
        <Separator />
        <Tool icon={<SortIcon />} label="排序" menu />
        <Separator />
        <Tool icon={<UpIcon />} label="上移" accel="U" disabled />
        <Tool icon={<DownIcon />} label="下移" accel="W" disabled />
        <Marker d="M5 4 40 6 49 9 81 9" className="top-[26px] left-[23px]" />
      </div>
      <div className="flex min-h-0 flex-1 gap-1">
        <MemberTree />
        <div className="flex-1 border border-[#a0a0a8] bg-white pt-px pl-[2px]">
          <MemberTable />
        </div>
      </div>
      <footer className="flex h-[51px] shrink-0 items-center justify-end gap-[18px] pt-[2px] pr-4 text-[15px]">
        <button type="button" className="h-[29px] w-[91px] border border-[#adadad] bg-[#e1e1e1] text-black">确定</button>
        <button type="button" className="h-[29px] w-[91px] border border-[#adadad] bg-[#e1e1e1] text-black">取消</button>
      </footer>
    </section>
  );
}

export default function App() {
  return (
    <div className="relative flex h-screen flex-col overflow-hidden bg-[#f0f0f0] font-['Noto_Sans_CJK_SC',sans-serif] text-black">
      <div className="flex h-3 shrink-0 items-start gap-[68px] pl-[854px]">
        <span className="h-px w-4 bg-[#6fa8dc]" />
        <span className="h-px w-1 bg-[#9fd0f2]" />
      </div>
      <MainToolbar />
      <div className="flex min-h-0 flex-1">
        <Sidebar />
        <Workspace />
      </div>
      <MemberDialog />
    </div>
  );
}
